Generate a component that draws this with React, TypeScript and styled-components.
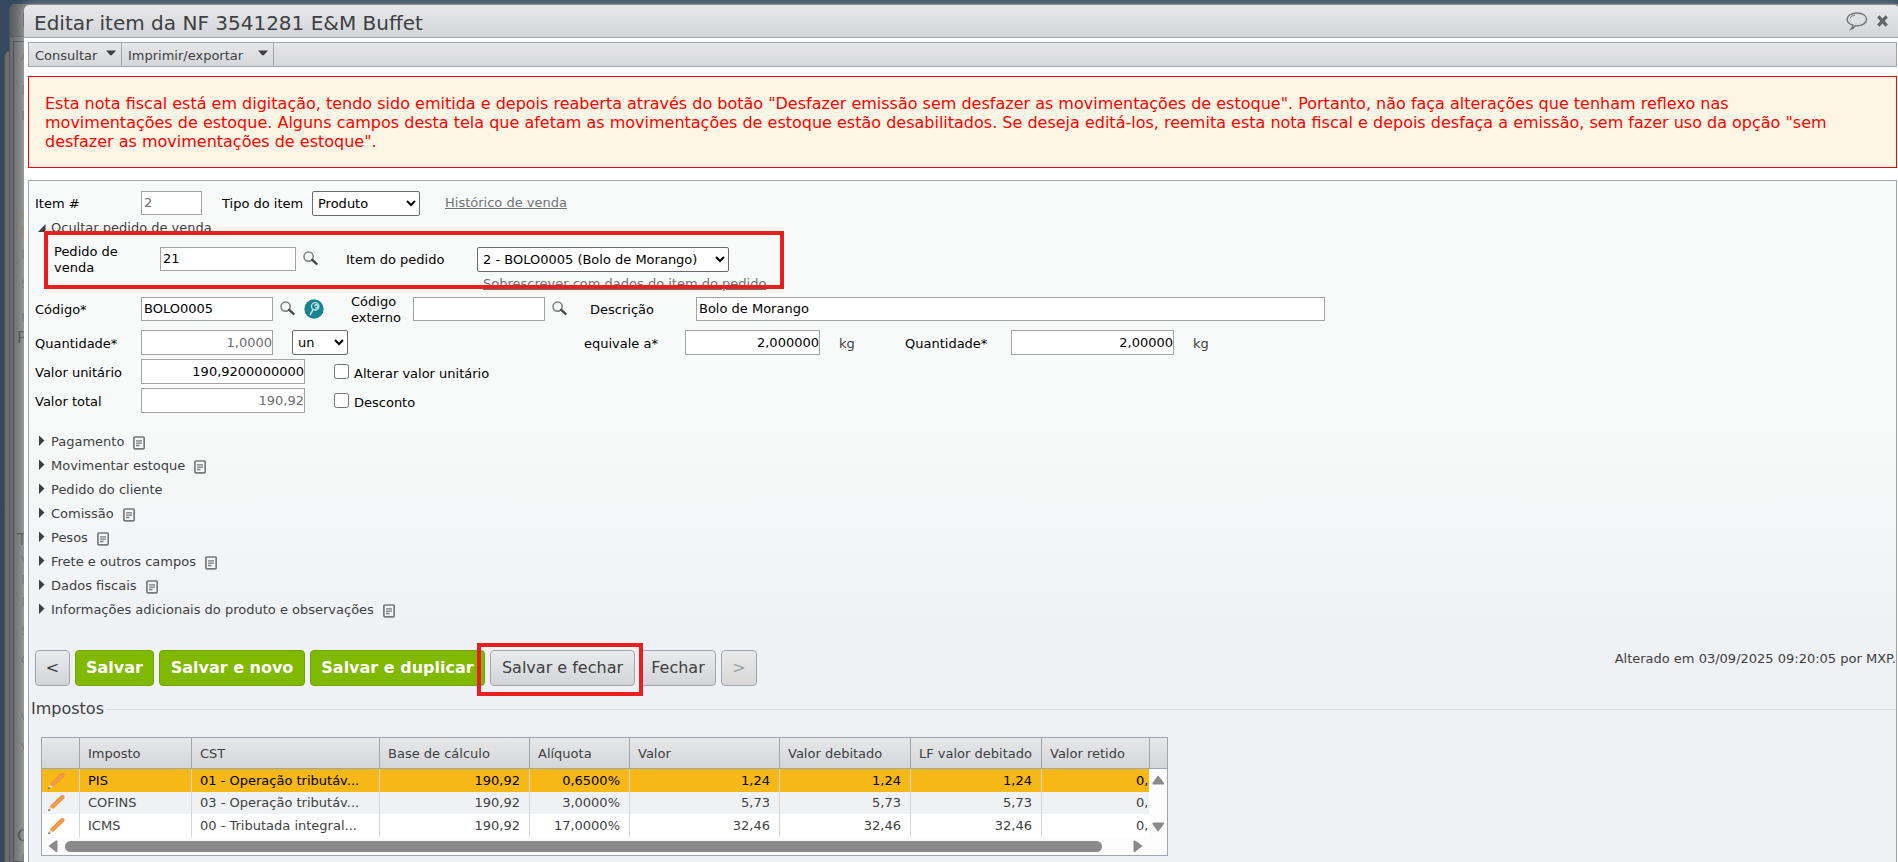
import React from "react";
import styled, { createGlobalStyle, css } from "styled-components";

const GlobalStyle = createGlobalStyle`
  * { box-sizing: border-box; }
  html, body, #root { height: 100%; }
  body {
    margin: 0;
    overflow: hidden;
    background: #34485c;
    color: #3d3f42;
    font: 13px/16px Verdana, "DejaVu Sans", sans-serif;
  }
  button, input, select { font: inherit; }
`;

const line = "#a0a6b0";

const Desktop = styled.div`
  position: relative;
  height: 100%;
  overflow: hidden;
  background: #34495f;
`;

const BackWindow = styled.div<{ $left: number; $top: number }>`
  position: absolute;
  left: ${(p) => p.$left}px;
  top: ${(p) => p.$top}px;
  right: 0;
  bottom: 0;
  border-left: 1px solid #505254;
  border-radius: 6px 0 0 0;
  background: linear-gradient(90deg, #68696a, #868788 16px);
`;

const BackTitle = styled.div`
  height: 33px;
  padding: 8px 0 0 11px;
  border-bottom: 1px solid #55585c;
  border-radius: 6px 0 0 0;
  background: linear-gradient(90deg, #5a5b5c, #7c7d7e 16px);
  color: #444;
  font-size: 20px;
`;

const BackPanel = styled.div`
  position: absolute;
  left: 3px;
  top: 37px;
  right: 0;
  bottom: 0;
  border: 1px solid #4c5054;
  border-right: 0;
`;

const BackText = styled.span<{ $top: number; $big?: boolean; $warm?: boolean }>`
  position: absolute;
  left: ${(p) => (p.$big ? 3 : 7)}px;
  top: ${(p) => p.$top}px;
  color: ${(p) => (p.$big ? "#404142" : p.$warm ? "#8a7448" : "#5c5c5c")};
  font-size: ${(p) => (p.$big ? 16 : 13)}px;
`;

const Dialog = styled.section`
  position: relative;
  display: flex;
  flex-direction: column;
  min-height: 100%;
  margin: 5px 0 0 24px;
  border-radius: 6px 4px 0 0;
  background: #fff;
  box-shadow: 0 0 12px rgba(175, 175, 175, 0.9);
`;

const TitleBar = styled.header`
  display: flex;
  align-items: center;
  justify-content: space-between;
  height: 33px;
  padding: 0 9px 0 10px;
  border-bottom: 1px solid ${line};
  border-radius: 6px 4px 0 0;
  background: linear-gradient(#e8e8ea, #d3d5d9);
`;

const Title = styled.h1`
  margin: 0;
  padding-top: 4px;
  color: #3d3f42;
  font-size: 20px;
  font-weight: 400;
  line-height: 28px;
`;

const TitleActions = styled.div`
  display: flex;
  align-items: center;
  gap: 8px;
`;

const IconButton = styled.button`
  display: flex;
  align-items: center;
  padding: 0;
  border: 0;
  background: none;
`;

const Body = styled.div`
  display: flex;
  flex: 1;
  flex-direction: column;
  padding: 4px 1px 0 4px;
`;

const Toolbar = styled.nav`
  display: flex;
  height: 25px;
  border: 1px solid ${line};
  background: linear-gradient(#e8e8ea, #d5d6da);
`;

const MenuButton = styled.button<{ $width: number }>`
  display: flex;
  align-items: center;
  justify-content: space-between;
  min-width: ${(p) => p.$width}px;
  padding: 2px 5px 0 6px;
  border: 0;
  border-right: 1px solid ${line};
  background: none;
  color: #3d3f42;

  svg { margin-top: -6px; }
`;

const Alert = styled.p`
  margin: 9px 0 0;
  padding: 17px 40px 16px 16px;
  border: 1px solid #f00;
  background: #fef6e4;
  color: #f00;
  font-size: 16px;
  line-height: 19px;
`;

const Panel = styled.form`
  flex: 1;
  margin-top: 12px;
  padding-top: 9px;
  border: 1px solid ${line};
  border-bottom: 0;
  background: linear-gradient(#f8faf9 240px, #f0f1f4 450px);
`;

const Row = styled.div<{ $cols: string; $height?: number; $gap?: number }>`
  display: grid;
  grid-template-columns: ${(p) => p.$cols};
  align-items: center;
  height: ${(p) => p.$height ?? 25}px;
  margin-top: ${(p) => p.$gap ?? 0}px;
  padding-left: 6px;
`;

const OrderRow = styled.div`
  position: relative;
  display: grid;
  grid-template-columns: 106px 143px 43px 131px max-content;
  grid-template-rows: 34px 16px;
  align-items: center;
  width: max-content;
  margin-top: 2px;
  padding-left: 25px;
`;

const Label = styled.label`
  padding-top: 2px;
  color: #000;
`;

const Unit = styled.span`
  padding-top: 2px;
`;

const Field = styled.input<{ $width: number }>`
  width: ${(p) => p.$width}px;
  height: 24px;
  padding: 0 0 1px 2px;
  border: 1px solid #a3a3a3;
  border-radius: 0;
  background: #fff;
  color: #000;

  &:disabled { color: #6d6d6d; }
`;

const NumberField = styled(Field)`
  height: 25px;
  padding: 0;
  text-align: right;
`;

const Picker = styled.select<{ $width: number }>`
  width: ${(p) => p.$width}px;
  height: 25px;
  padding: 0 0 0 1px;
  border: 1px solid #6b6b6b;
  border-radius: 2px;
  background: #fff;
  color: #000;
`;

const Link = styled.a<{ $indent?: number }>`
  grid-column: ${(p) => (p.$indent ? 5 : "auto")};
  padding-left: ${(p) => p.$indent ?? 0}px;
  color: #6f7276;
  text-decoration: underline;
`;

const Check = styled.label`
  display: flex;
  align-items: center;
  gap: 5px;
  color: #000;

  input { width: 15px; height: 15px; margin: 0; }
  span { padding-top: 5px; }
`;

const Highlight = styled.span<{ $inset: string }>`
  position: absolute;
  inset: ${(p) => p.$inset};
  border: 4px solid #e91e1e;
  pointer-events: none;
`;

const Disclosure = styled.button`
  display: flex;
  align-items: center;
  height: 24px;
  padding: 0 0 0 9px;
  border: 0;
  background: none;
  color: #3d3f42;

  > svg:first-child { margin: -2px 5px 0 0; }
  > svg:nth-of-type(2) { margin: 1px 0 0 9px; }
`;

const Sections = styled.div`
  display: flex;
  flex-direction: column;
  align-items: flex-start;
  margin-top: 17px;
`;

const Actions = styled.div`
  display: flex;
  align-items: flex-start;
  justify-content: space-between;
  margin: 28px 0 0 6px;
`;

const ButtonGroup = styled.div`
  display: flex;
  gap: 5px;
`;

const ButtonSlot = styled.div`
  position: relative;
`;

const Action = styled.button<{ $width: number; $primary?: boolean }>`
  min-width: ${(p) => p.$width}px;
  height: 36px;
  padding: 0;
  border: 1px solid ${line};
  border-radius: 4px;
  background: linear-gradient(#eaebed, #d3d4d8);
  color: #3d3f42;
  font-size: 16px;
  white-space: nowrap;

  ${(p) =>
    p.$primary &&
    css`
      border-color: #6fa300;
      background: #80b900;
      color: #fff;
      font-weight: 700;
    `}

  &:disabled { background: linear-gradient(#e9e9ea, #d8d7d6); color: #9aa0aa; }
`;

const Changed = styled.span`
  padding-top: 1px;
`;

const Taxes = styled.fieldset`
  min-width: 0;
  margin: 14px 0 0;
  padding: 19px 0 0;
  border: 0;
  border-top: 1px solid #d9dadd;

  legend { padding: 0 2px; font-size: 16px; line-height: 18px; }
`;

const Grid = styled.div`
  width: 1127px;
  margin-left: 12px;
  border: 1px solid ${line};
  background: #fcfcfc;
`;

const GridMain = styled.div`
  display: flex;
`;

const GridView = styled.div`
  width: 1107px;
  overflow: hidden;
`;

const Table = styled.table`
  width: 1133px;
  border-collapse: separate;
  border-spacing: 0;
  table-layout: fixed;
  white-space: nowrap;
`;

const HeadCell = styled.th`
  height: 31px;
  padding: 1px 0 0 8px;
  border-right: 1px solid ${line};
  border-bottom: 1px solid ${line};
  background: linear-gradient(#e8e8ea, #d3d5d9);
  font-weight: 400;
  text-align: left;
`;

const Cell = styled.td<{ $num?: boolean }>`
  height: 23px;
  padding: 0 9px 0 8px;
  border-right: 1px solid #d3d5d8;
  overflow: hidden;
  text-align: ${(p) => (p.$num ? "right" : "left")};
`;

const EditCell = styled(Cell)`
  padding: 0 0 0 5px;
`;

const BodyRow = styled.tr<{ $selected?: boolean }>`
  background: #fff;
  &:nth-child(2) { background: #f0f1f3; }
  &:nth-child(2) ${Cell} { height: 22px; }
  ${(p) => p.$selected && css`background: #f5b816; color: #000;`}
`;

const Side = styled.div`
  display: flex;
  flex: 1;
  flex-direction: column;
`;

const Corner = styled.div`
  height: 31px;
  border-bottom: 1px solid ${line};
  border-left: 1px solid ${line};
  background: linear-gradient(#e8e8ea, #d3d5d9);
`;

const VerticalBar = styled.div`
  display: flex;
  flex: 1;
  flex-direction: column;
  align-items: center;
  justify-content: space-between;
  padding: 6px 0 5px;
`;

const HorizontalBar = styled.div`
  display: flex;
  align-items: center;
  height: 18px;
  padding: 0 24px 0 6px;
`;

const Track = styled.div`
  flex: 1;
  margin: 0 31px 0 7px;
`;

const Thumb = styled.div`
  height: 11px;
  border-radius: 6px;
  background: #8a8a8a;
`;

const Chevron = () => (
  <svg width="10" height="6" viewBox="0 0 10 6"><path d="M0 0.5h10L5.8 5.3h-1.6z" fill="#3d3f42" /></svg>
);

const Expander = ({ open }: { open?: boolean }) => (
  <svg width="8" height="12" viewBox="0 0 8 12">
    <path d={open ? "M0 11L7.5 3v8z" : "M1 0.500L6.500 5.500L1 11z"} fill="#3d3f42" />
  </svg>
);

const NoteIcon = () => (
  <svg width="12" height="14" viewBox="0 0 12 14" fill="none" stroke="#77797c">
    <rect x="0.9" y="1" width="10.3" height="11.8" rx="1" strokeWidth="1.7" />
    <path d="M3 4.800h6M3 7.200h6M3 9.500h3.500" strokeWidth="1.3" />
  </svg>
);

const SearchIcon = () => (
  <svg width="16" height="16" viewBox="0 0 16 16" fill="none">
    <circle cx="5.6" cy="5.6" r="4.6" stroke="#7c7e80" strokeWidth="1.5" fill="#f8f8f8" />
    <path d="M9.2 8.8L13.6 12.8" stroke="#45474a" strokeWidth="2.4" strokeLinecap="round" />
  </svg>
);

const InspectIcon = () => (
  <svg width="20" height="20" viewBox="0 0 20 20" fill="none">
    <circle cx="10" cy="10" r="9.7" fill="#17838f" />
    <circle cx="11.2" cy="7.3" r="3.7" stroke="#b9e4e6" strokeWidth="1.3" />
    <path d="M10.8 6.8a1.6 1.6 0 1 1 1 2M9 10.7L6.3 15.6" stroke="#b9e4e6" strokeWidth="1.5" strokeLinecap="round" />
  </svg>
);

const BalloonIcon = () => (
  <svg width="22" height="20" viewBox="0 0 22 20" fill="none" stroke="#707276">
    <path d="M7 14.2C3.500 13 1.200 11 1.200 8.400 1.200 4.600 5.500 2 11 2s9.600 2.600 9.600 6.200-4.100 6.700-9.600 6.700c-.7 0-1.300 0-1.900-.1-.9 1.500-2.400 2.800-4.300 3.400C5.900 17 6.800 15.800 7 14.200z" strokeWidth="1.4" />
    <path d="M4 7.200C4.800 5.400 6.800 4.500 9 4.200" />
  </svg>
);

const CloseIcon = () => (
  <svg width="13" height="12" viewBox="0 0 13 12">
    <path d="M2.300 1.400l8.400 9.200M10.700 1.400l-8.400 9.200" stroke="#626467" strokeWidth="3.200" />
  </svg>
);

const PencilIcon = () => (
  <svg width="20" height="18" viewBox="0 0 20 18">
    <path d="M2.600 12.600L13.800 1.600Q15.500 0.300 17 1.500Q18.400 2.900 17.200 4.500L6 15z" fill="#ee9440" />
    <path d="M4.300 13.800L16 2.700" stroke="#f5ab62" strokeWidth="1" />
    <path d="M1.200 16.800L2.600 12.600L6 15z" fill="#f5dcb5" />
    <path d="M1 17.200L1.800 14.900L3.500 16.200z" fill="#555" />
  </svg>
);

const arrows = {
  up: "M6 0.500Q6.500 0.500 12 8Q12.500 9.500 11 9.500H1.500Q0 9.500 0.500 8z",
  down: "M1.500 0.500H11Q12.500 0.500 12 2Q6.500 9.500 6 9.500Q5.500 9.500 0.500 2Q0 0.500 1.500 0.500z",
  left: "M0.500 6Q0.500 5.500 8 0.500Q9.500 0 9.500 1.500V11Q9.500 12.500 8 12z",
  right: "M9.500 6Q9.500 5.500 2 0.500Q0.500 0 0.500 1.500V11Q0.500 12.500 2 12z",
};

const Arrow = ({ dir }: { dir: keyof typeof arrows }) => {
  const tall = dir === "left" || dir === "right";
  return (
    <svg width={tall ? 10 : 13} height={tall ? 13 : 10}><path d={arrows[dir]} fill="#8a8a8a" /></svg>
  );
};

const sections: [string, boolean][] = [
  ["Pagamento", true],
  ["Movimentar estoque", true],
  ["Pedido do cliente", false],
  ["Comissão", true],
  ["Pesos", true],
  ["Frete e outros campos", true],
  ["Dados fiscais", true],
  ["Informações adicionais do produto e observações", true],
];

const columns: [string, number][] = [
  ["", 38],
  ["Imposto", 112],
  ["CST", 188],
  ["Base de cálculo", 150],
  ["Alíquota", 100],
  ["Valor", 150],
  ["Valor debitado", 131],
  ["LF valor debitado", 131],
  ["Valor retido", 133],
];

const taxes = [
  ["PIS", "01 - Operação tributáv...", "190,92", "0,6500%", "1,24", "1,24", "1,24", "0,00"],
  ["COFINS", "03 - Operação tributáv...", "190,92", "3,0000%", "5,73", "5,73", "5,73", "0,00"],
  ["ICMS", "00 - Tributada integral...", "190,92", "17,0000%", "32,46", "32,46", "32,46", "0,00"],
];

const behind: { text: string; top: number; big?: boolean; warm?: boolean }[] = [
  { text: "A", top: 6 },
  { text: "D", top: 40 },
  { text: "E", top: 66 },
  { text: "c", top: 164, warm: true },
  { text: "f", top: 181, warm: true },
  { text: "F", top: 205 },
  { text: "S", top: 234 },
  { text: "E", top: 268 },
  { text: "P", top: 288, big: true },
  { text: "T", top: 490, big: true },
  { text: "V", top: 511 },
  { text: "P", top: 530 },
  { text: "F", top: 552 },
  { text: "S", top: 581 },
  { text: "C", top: 610 },
  { text: "V", top: 669 },
  { text: "V", top: 698 },
  { text: "C", top: 786, big: true },
  { text: "E", top: 809 },
];

export default function App() {
  return (
    <Desktop>
      <GlobalStyle />
      <BackWindow $left={4} $top={51} />
      <BackWindow $left={9} $top={4}>
        <BackTitle>N</BackTitle>
        <BackPanel>
          {behind.map((b) => (
            <BackText key={b.top} $top={b.top} $big={b.big} $warm={b.warm}>{b.text}</BackText>
          ))}
        </BackPanel>
      </BackWindow>

      <Dialog>
        <TitleBar>
          <Title>Editar item da NF 3541281 E&amp;M Buffet</Title>
          <TitleActions>
            <IconButton type="button" aria-label="Comentários"><BalloonIcon /></IconButton>
            <IconButton type="button" aria-label="Fechar janela"><CloseIcon /></IconButton>
          </TitleActions>
        </TitleBar>

        <Body>
          <Toolbar>
            <MenuButton type="button" $width={93}>Consultar <Chevron /></MenuButton>
            <MenuButton type="button" $width={152}>Imprimir/exportar <Chevron /></MenuButton>
          </Toolbar>

          <Alert>
            Esta nota fiscal está em digitação, tendo sido emitida e depois reaberta através do botão "Desfazer emissão
            sem desfazer as movimentações de estoque". Portanto, não faça alterações que tenham reflexo nas
            movimentações de estoque. Alguns campos desta tela que afetam as movimentações de estoque estão
            desabilitados. Se deseja editá-los, reemita esta nota fiscal e depois desfaça a emissão, sem fazer uso da
            opção "sem desfazer as movimentações de estoque".
          </Alert>

          <Panel onSubmit={(e) => e.preventDefault()}>
            <Row $cols="106px 81px 90px 133px max-content" $height={26}>
              <Label htmlFor="item">Item #</Label>
              <Field id="item" $width={61} defaultValue="2" disabled />
              <Label htmlFor="tipo">Tipo do item</Label>
              <Picker id="tipo" $width={108}><option>Produto</option></Picker>
              <Link href="#historico">Histórico de venda</Link>
            </Row>

            <Disclosure type="button"><Expander open />Ocultar pedido de venda</Disclosure>

            <OrderRow>
              <Label htmlFor="pedido">Pedido de<br />venda</Label>
              <Field id="pedido" $width={136} defaultValue="21" />
              <IconButton type="button" aria-label="Buscar pedido"><SearchIcon /></IconButton>
              <Label htmlFor="itemPedido">Item do pedido</Label>
              <Picker id="itemPedido" $width={252}><option>2 - BOLO0005 (Bolo de Morango)</option></Picker>
              <Link href="#sobrescrever" $indent={6}>Sobrescrever com dados do item do pedido</Link>
              <Highlight $inset="-11px -18px 3px 15px" />
            </OrderRow>

            <Row $cols="106px 139px 24px 47px 62px 139px 38px 106px max-content" $height={34}>
              <Label htmlFor="codigo">Código*</Label>
              <Field id="codigo" $width={132} defaultValue="BOLO0005" />
              <IconButton type="button" aria-label="Buscar código"><SearchIcon /></IconButton>
              <IconButton type="button" aria-label="Ver produto"><InspectIcon /></IconButton>
              <Label htmlFor="externo">Código<br />externo</Label>
              <Field id="externo" $width={132} />
              <IconButton type="button" aria-label="Buscar código externo"><SearchIcon /></IconButton>
              <Label htmlFor="descricao">Descrição</Label>
              <Field id="descricao" $width={629} defaultValue="Bolo de Morango" />
            </Row>

            <Row $cols="106px 151px 292px 101px 154px 66px 106px 182px max-content" $gap={4}>
              <Label htmlFor="qtd">Quantidade*</Label>
              <NumberField id="qtd" $width={132} defaultValue="1,0000" disabled />
              <Picker aria-label="Unidade" $width={56}><option>un</option></Picker>
              <Label htmlFor="equivale">equivale a*</Label>
              <NumberField id="equivale" $width={135} defaultValue="2,000000" />
              <Unit>kg</Unit>
              <Label htmlFor="qtdKg">Quantidade*</Label>
              <NumberField id="qtdKg" $width={163} defaultValue="2,00000" />
              <Unit>kg</Unit>
            </Row>

            <Row $cols="106px 193px max-content" $gap={4}>
              <Label htmlFor="unitario">Valor unitário</Label>
              <NumberField id="unitario" $width={164} defaultValue="190,9200000000" />
              <Check><input type="checkbox" /><span>Alterar valor unitário</span></Check>
            </Row>

            <Row $cols="106px 193px max-content" $gap={4}>
              <Label htmlFor="total">Valor total</Label>
              <NumberField id="total" $width={164} defaultValue="190,92" disabled />
              <Check><input type="checkbox" /><span>Desconto</span></Check>
            </Row>

            <Sections>
              {sections.map(([name, note]) => (
                <Disclosure type="button" key={name}><Expander />{name}{note && <NoteIcon />}</Disclosure>
              ))}
            </Sections>

            <Actions>
              <ButtonGroup>
                <Action type="button" $width={35}>&lt;</Action>
                <Action type="button" $width={79} $primary>Salvar</Action>
                <Action type="button" $width={146} $primary>Salvar e novo</Action>
                <Action type="button" $width={175} $primary>Salvar e duplicar</Action>
                <ButtonSlot>
                  <Action type="button" $width={145}>Salvar e fechar</Action>
                  <Highlight $inset="-7px -8px -10px -13px" />
                </ButtonSlot>
                <Action type="button" $width={76}>Fechar</Action>
                <Action type="button" $width={36} disabled>&gt;</Action>
              </ButtonGroup>
              <Changed>Alterado em 03/09/2025 09:20:05 por MXP.</Changed>
            </Actions>

            <Taxes>
              <legend>Impostos</legend>
              <Grid>
                <GridMain>
                  <GridView>
                    <Table>
                      <colgroup>
                        {columns.map(([name, width]) => <col key={name} width={width} />)}
                      </colgroup>
                      <thead>
                        <tr>{columns.map(([name]) => <HeadCell key={name}>{name}</HeadCell>)}</tr>
                      </thead>
                      <tbody>
                        {taxes.map((tax, row) => (
                          <BodyRow key={tax[0]} $selected={row === 0}>
                            <EditCell>
                              <IconButton type="button" aria-label={`Editar ${tax[0]}`}><PencilIcon /></IconButton>
                            </EditCell>
                            {tax.map((value, i) => <Cell key={i} $num={i > 1}>{value}</Cell>)}
                          </BodyRow>
                        ))}
                      </tbody>
                    </Table>
                  </GridView>
                  <Side>
                    <Corner />
                    <VerticalBar><Arrow dir="up" /><Arrow dir="down" /></VerticalBar>
                  </Side>
                </GridMain>
                <HorizontalBar>
                  <Arrow dir="left" />
                  <Track><Thumb /></Track>
                  <Arrow dir="right" />
                </HorizontalBar>
              </Grid>
            </Taxes>
          </Panel>
        </Body>
      </Dialog>
    </Desktop>
  );
}
